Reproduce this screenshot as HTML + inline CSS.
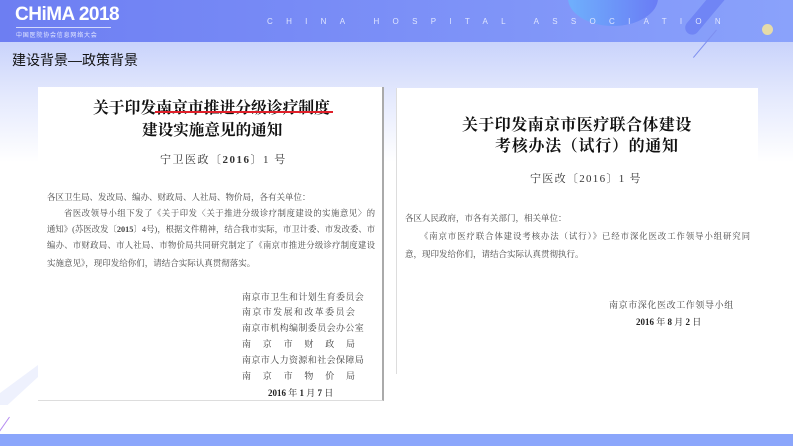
<!DOCTYPE html>
<html><head><meta charset="utf-8"><style>
*{margin:0;padding:0;box-sizing:border-box}
body{width:793px;height:446px;overflow:hidden;position:relative;background:#fff;font-family:"Liberation Serif","Noto Serif CJK SC",serif}
.abs{position:absolute;white-space:nowrap}
#hdr{position:absolute;left:0;top:0;width:793px;height:42px;background:linear-gradient(90deg,#6d7ef2 0%,#7b8ff7 50%,#8aa2fb 100%);overflow:hidden}
#band{position:absolute;left:0;top:42px;width:793px;height:120px;background:linear-gradient(180deg,#c9d3fb 0%,#e4e9fd 45%,#fff 100%)}
.doc{position:absolute;background:#fff}
.t{font-weight:bold;color:#111;font-size:16px}
.s{font-size:9px;color:#444}
.j{display:flex;justify-content:space-between}
.jl{text-align:justify;text-align-last:justify;font-size:8.3px;overflow:hidden}
</style></head><body>
<div id="band"></div>
<div id="hdr">
  <div style="position:absolute;left:568px;top:-30px;width:90px;height:56px;border-radius:50%;background:linear-gradient(90deg,#6fb0fc,#6a7cf5)"></div>
  <div style="position:absolute;left:700px;top:-20px;width:14px;height:60px;border-radius:7px;background:#7085f5;transform:rotate(40deg)"></div>
  <div style="position:absolute;left:762px;top:24px;width:11px;height:11px;border-radius:50%;background:#e6dba9"></div>
</div>
<div style="position:absolute;left:716px;top:30px;width:1px;height:36px;background:#7e8ff0;transform:rotate(40deg);transform-origin:top"></div>
<div class="abs" style="left:15px;top:4px;font-family:'Liberation Sans',sans-serif;font-weight:bold;color:#fff;font-size:19px;letter-spacing:-0.5px">CHiMA 2018</div>
<div class="abs" style="left:16px;top:27px;width:95px;height:1px;background:#fff;opacity:.7"></div>
<div class="abs" style="left:16px;top:30px;font-family:'Liberation Sans','Noto Sans CJK SC',sans-serif;color:#e3e7ff;font-size:6px;letter-spacing:0.8px">中国医院协会信息网络大会</div>
<div class="abs" style="left:267px;top:17px;font-family:'Liberation Sans',sans-serif;color:#dfe5ff;font-size:8px;letter-spacing:13.3px">CHINA HOSPITAL ASSOCIATION</div>
<div class="abs" style="left:12px;top:50px;font-family:'Liberation Sans','Noto Sans CJK SC',sans-serif;color:#111;font-size:14px">建设背景—政策背景</div>

<div style="position:absolute;left:0;top:365px;width:38px;height:40px;background:#eef1fd;clip-path:polygon(100% 0,100% 30%,20% 100%,0 100%,0 70%)"></div>
<div style="position:absolute;left:9px;top:417px;width:1px;height:36px;background:#b48af0;transform:rotate(35deg);transform-origin:top"></div>
<div style="position:absolute;left:51px;top:386px;width:7px;height:11px;border-radius:50%;background:#a9dcfb"></div>
<div style="position:absolute;left:0;top:434px;width:793px;height:12px;background:#8ba6fb"></div>

<!-- left doc -->
<div class="doc" style="left:38px;top:87px;width:346px;height:314px;border-right:2px solid #aaa;border-bottom:1px solid #ddd"></div>
<div class="abs t" style="left:93px;top:95px;font-size:15.8px">关于印发南京市推进分级诊疗制度</div>
<div class="abs" style="left:155px;top:111px;width:178px;height:2px;background:#e0202a"></div>
<div class="abs t" style="left:142px;top:118px;font-size:15.6px">建设实施意见的通知</div>
<div class="abs" style="left:160px;top:151px;font-size:11px;color:#333;letter-spacing:1.5px">宁卫医政〔<b>2016</b>〕1 号</div>
<div class="abs s" style="left:47px;top:191px;font-size:8.5px">各区卫生局、发改局、编办、财政局、人社局、物价局，各有关单位：</div>
<div class="abs s jl" style="left:64px;top:207px;width:311px">省医改领导小组下发了《关于印发〈关于推进分级诊疗制度建设的实施意见〉的</div>
<div class="abs s jl" style="left:47px;top:223px;width:328px">通知》(苏医改发〔<b>2015</b>〕4号)，根据文件精神，结合我市实际，市卫计委、市发改委、市</div>
<div class="abs s jl" style="left:47px;top:239px;width:328px">编办、市财政局、市人社局、市物价局共同研究制定了《南京市推进分级诊疗制度建设</div>
<div class="abs s" style="left:47px;top:257px;font-size:8.5px">实施意见》，现印发给你们，请结合实际认真贯彻落实。</div>
<div class="abs s" style="left:242px;top:290px;letter-spacing:0.4px">南京市卫生和计划生育委员会</div>
<div class="abs s j" style="left:242px;top:305px;width:113px"><span>南</span><span>京</span><span>市</span><span>发</span><span>展</span><span>和</span><span>改</span><span>革</span><span>委</span><span>员</span><span>会</span></div>
<div class="abs s" style="left:242px;top:321px;letter-spacing:0.4px">南京市机构编制委员会办公室</div>
<div class="abs s j" style="left:242px;top:337px;width:113px"><span>南</span><span>京</span><span>市</span><span>财</span><span>政</span><span>局</span></div>
<div class="abs s" style="left:242px;top:353px;letter-spacing:0.4px">南京市人力资源和社会保障局</div>
<div class="abs s j" style="left:242px;top:369px;width:113px"><span>南</span><span>京</span><span>市</span><span>物</span><span>价</span><span>局</span></div>
<div class="abs s" style="left:268px;top:386px;color:#222"><b>2016</b> 年 <b>1</b> 月 <b>7</b> 日</div>

<!-- right doc -->
<div class="doc" style="left:396px;top:88px;width:362px;height:286px;border-left:1px solid #ddd"></div>
<div class="abs t" style="left:462px;top:112px;font-size:16px;letter-spacing:0.4px">关于印发南京市医疗联合体建设</div>
<div class="abs t" style="left:495px;top:133px;font-size:16px;letter-spacing:0.7px">考核办法（试行）的通知</div>
<div class="abs" style="left:530px;top:170px;font-size:11px;color:#333;letter-spacing:1.3px">宁医改〔2016〕1 号</div>
<div class="abs s" style="left:405px;top:212px;font-size:8.5px">各区人民政府，市各有关部门，相关单位：</div>
<div class="abs s jl" style="left:420px;top:230px;width:330px">《南京市医疗联合体建设考核办法（试行）》已经市深化医改工作领导小组研究同</div>
<div class="abs s" style="left:405px;top:248px;font-size:8.5px">意，现印发给你们，请结合实际认真贯彻执行。</div>
<div class="abs s" style="left:609px;top:298px;letter-spacing:0.6px">南京市深化医改工作领导小组</div>
<div class="abs s" style="left:636px;top:315px;color:#222"><b>2016</b> 年 <b>8</b> 月 <b>2</b> 日</div>
</body></html>
